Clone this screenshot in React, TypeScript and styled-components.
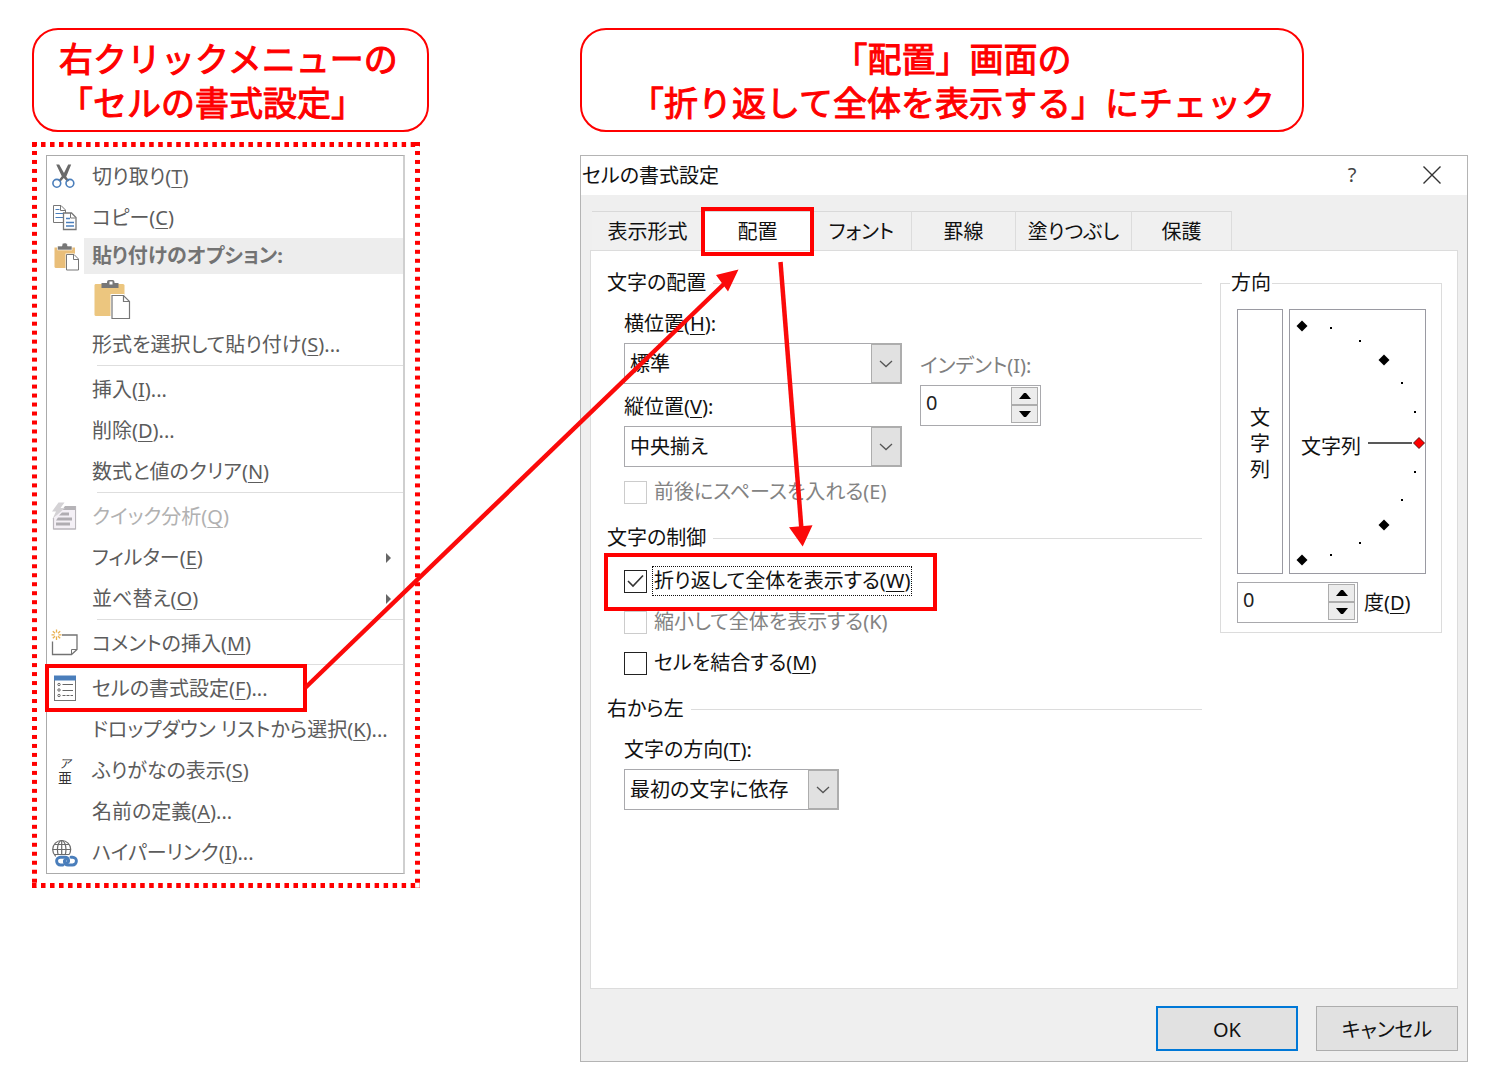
import React, { useState } from "react";
import styled, { createGlobalStyle, css } from "styled-components";

const RED = "#ff0000";
const UI_FONT = '"Noto Sans", "Noto Sans CJK JP", sans-serif';
const JP_FONT = '"Liberation Sans", "Noto Sans CJK JP", sans-serif';

const GlobalStyle = createGlobalStyle`
  *, *::before, *::after { box-sizing: border-box; }
  body {
    margin: 0;
    background: #fff;
    font: 400 20px/24px ${UI_FONT};
    font-feature-settings: "palt";
    color: #111;
  }
  button, input, select { font: inherit; color: inherit; font-feature-settings: inherit; }
  u {
    text-decoration-thickness: 1px;
    text-underline-offset: 3px;
    text-decoration-skip-ink: none;
  }
`;

/* ---------- page ---------- */

const Page = styled.main`
  position: relative;
  display: grid;
  grid-template-columns: 397px minmax(780px, 1fr);
  column-gap: 151px;
  align-items: start;
  padding: 28px 32px;
`;

const Column = styled.section`
  display: flex;
  flex-direction: column;
  align-items: flex-start;
`;

const Callout = styled.h2<{ $centered?: boolean }>`
  margin: 0;
  padding: 8px 25px 4px;
  width: 100%;
  border: 2px solid ${RED};
  border-radius: 26px;
  color: ${RED};
  font: 400 34px/44px ${JP_FONT};
  font-feature-settings: normal;
  -webkit-text-stroke: 1px ${RED};
  white-space: nowrap;
  ${(p) =>
    p.$centered &&
    css`
      width: auto;
      padding-left: 48px;
      padding-right: 27px;
      text-align: center;
    `}
`;

const Highlight = styled.span<{ $inset: string }>`
  position: absolute;
  inset: ${(p) => p.$inset};
  border: 4px solid ${RED};
  pointer-events: none;
  z-index: 1;
`;

const Arrows = styled.svg`
  position: absolute;
  top: 0;
  left: 0;
  pointer-events: none;
  z-index: 2;
`;

/* ---------- context menu ---------- */

const DottedFrame = styled.div`
  margin-top: 10px;
  padding: 13px 15px 14px 14px;
  width: 388px;
  background:
    linear-gradient(90deg, ${RED} 50%, transparent 50%) 0 0 / 9px 5px round no-repeat,
    linear-gradient(90deg, ${RED} 50%, transparent 50%) 0 100% / 9px 5px round no-repeat,
    linear-gradient(${RED} 50%, transparent 50%) 0 0 / 5px 9px no-repeat round,
    linear-gradient(${RED} 50%, transparent 50%) 100% 0 / 5px 9px no-repeat round;
`;

const MenuList = styled.ul`
  margin: 0;
  padding: 0;
  list-style: none;
  background: #fff;
  border: 1px solid #ababab;
  border-right: 2px solid #cfcfcf;
  color: #5c5c5c;
`;

const MenuItem = styled.li<{ $header?: boolean }>`
  position: relative;
  display: grid;
  grid-template-columns: 37px 1fr;
  align-items: center;
  height: ${(p) => (p.$header ? 35 : 41)}px;
`;

const IconCell = styled.span`
  display: flex;
  padding-left: 4px;
`;

const MenuButton = styled.button`
  display: flex;
  align-items: center;
  justify-content: space-between;
  height: 100%;
  padding: 0 12px 0 8px;
  border: 0;
  background: transparent;
  text-align: left;
  white-space: nowrap;
  &:disabled { color: #b1b1b1; }
`;

const MenuHeading = styled.div`
  height: 100%;
  padding-left: 8px;
  background: #ededed;
  color: #737373;
  font-weight: 700;
  line-height: 36px;
`;

const PasteRow = styled.li`
  display: flex;
  align-items: center;
  height: 51px;
  padding-left: 45px;
`;

const PasteButton = styled.button`
  display: flex;
  padding: 0;
  border: 0;
  background: transparent;
`;

const Separator = styled.li`
  height: 4px;
  margin-left: 50px;
  border-top: 1px solid #dedede;
`;

const FuriganaGlyph = styled.span`
  display: flex;
  flex-direction: column;
  align-items: center;
  width: 28px;
  font: 400 14px/14px ${JP_FONT};
  color: #333;
  em { font-size: 12px; }
`;

/* ---------- dialog ---------- */

const Dialog = styled.div`
  width: 100%;
  margin-top: 23px;
  background: #efefef;
  border: 1px solid #b4b4b4;
`;

const TitleBar = styled.header`
  display: flex;
  align-items: center;
  height: 39px;
  background: #fff;
`;

const DialogTitle = styled.h1`
  flex: 1;
  margin: 0;
  padding-left: 1px;
  font-size: 20px;
  font-weight: 400;
`;

const TitleButton = styled.button`
  display: flex;
  align-items: center;
  justify-content: center;
  width: 70px;
  height: 38px;
  padding: 0 0 2px;
  margin-left: 10px;
  border: 0;
  background: transparent;
  color: #444;
`;

const DialogBody = styled.div`
  padding: 16px 9px 10px;
`;

const TabStrip = styled.div`
  display: flex;
  padding-left: 2px;
`;

const Tab = styled.button<{ $width: number; $active?: boolean }>`
  position: relative;
  width: ${(p) => p.$width}px;
  height: 39px;
  padding: 2px 0 0;
  border: 0;
  border-top: 1px solid #d9d9d9;
  border-right: 1px solid #dcdcdc;
  background: ${(p) => (p.$active ? "#fff" : "#f0f0f0")};
  white-space: nowrap;
`;

const TabPanel = styled.div`
  display: grid;
  grid-template-columns: 1fr 222px;
  column-gap: 18px;
  align-items: start;
  min-height: 739px;
  padding: 20px 15px 20px 16px;
  background: #fff;
  border: 1px solid #dcdcdc;
`;

const Section = styled.section`
  margin-bottom: 20px;
`;

const SectionTitle = styled.h3`
  display: flex;
  align-items: center;
  gap: 7px;
  margin: 0;
  font-size: 20px;
  font-weight: 400;
  &::after {
    content: "";
    flex: 1;
    height: 1px;
    background: #dcdcdc;
  }
`;

const SectionBody = styled.div`
  display: flex;
  gap: 18px;
  padding: 17px 0 0 17px;
`;

const FieldColumn = styled.div<{ $offset?: number; $gap: number }>`
  display: flex;
  flex-direction: column;
  align-items: flex-start;
  gap: ${(p) => p.$gap}px;
  padding-top: ${(p) => p.$offset ?? 0}px;
`;

const Field = styled.div<{ $disabled?: boolean }>`
  display: flex;
  flex-direction: column;
  gap: 7px;
  color: ${(p) => (p.$disabled ? "#808080" : "#111")};
`;

const SelectBox = styled.span<{ $width: number }>`
  position: relative;
  display: block;
  width: ${(p) => p.$width}px;
  height: 41px;
`;

const SelectControl = styled.select`
  appearance: none;
  width: 100%;
  height: 100%;
  padding: 0 36px 0 5px;
  border: 1px solid #a9a9ad;
  border-radius: 0;
  background: #fff;
`;

const SelectArrow = styled.span`
  position: absolute;
  top: 0;
  right: 0;
  display: flex;
  align-items: center;
  justify-content: center;
  width: 31px;
  height: 100%;
  border: 2px solid #adadad;
  border-left-width: 1px;
  background: #e1e1e1;
  pointer-events: none;
`;

const CheckRow = styled.label<{ $disabled?: boolean }>`
  position: relative;
  display: flex;
  align-items: center;
  gap: 6px;
  height: 28px;
  color: ${(p) => (p.$disabled ? "#838383" : "#111")};
`;

const CheckInput = styled.input`
  appearance: none;
  width: 23px;
  height: 23px;
  margin: 0;
  border: 1px solid #222;
  background: #fff;
  &:disabled { border-color: #ccc; }
`;

const CheckMark = styled.svg`
  position: absolute;
  top: 0;
  left: 0;
  pointer-events: none;
`;

const CheckText = styled.span<{ $focused?: boolean }>`
  padding: 2px 1px;
  white-space: nowrap;
  outline: ${(p) => (p.$focused ? "1px dotted #111" : "none")};
`;

const SpinBox = styled.span`
  display: flex;
  width: 121px;
  height: 41px;
  padding: 1px 2px 2px 0;
  border: 1px solid #a9a9ad;
  background: #fff;
`;

const SpinInput = styled.input`
  flex: 1;
  min-width: 0;
  padding: 0 0 4px 5px;
  border: 0;
  background: transparent;
  color: #222;
`;

const SpinButtons = styled.span`
  display: grid;
  grid-template-rows: 1fr 1fr;
  width: 27px;
`;

const SpinButton = styled.button`
  display: flex;
  align-items: center;
  justify-content: center;
  padding: 0;
  border: 1px solid #adadad;
  background: #ececec;
`;

const OrientationGroup = styled.fieldset`
  min-width: 0;
  margin: 0;
  padding: 0 9px 9px;
  border: 1px solid #dcdcdc;
`;

const GroupLegend = styled.legend`
  padding: 0 1px;
`;

const OrientationRow = styled.div`
  display: flex;
  gap: 6px;
  padding: 14px 6px 0 7px;
`;

const VerticalText = styled.button`
  display: flex;
  flex-direction: column;
  align-items: center;
  justify-content: center;
  width: 46px;
  height: 265px;
  padding: 5px 0 0;
  border: 1px solid #9a9aa2;
  background: #fff;
  line-height: 26px;
`;

const Dial = styled.div`
  position: relative;
  display: flex;
  align-items: center;
  flex: 1;
  height: 265px;
  padding: 10px 0 0 11px;
  border: 1px solid #9a9aa2;
  svg { position: absolute; inset: -1px; }
`;

const DegreeRow = styled.div`
  display: flex;
  align-items: center;
  gap: 6px;
  padding: 8px 0 0 7px;
`;

const Footer = styled.footer`
  display: flex;
  justify-content: flex-end;
  gap: 18px;
  padding-top: 17px;
`;

const DialogButton = styled.button<{ $primary?: boolean }>`
  width: 142px;
  height: 45px;
  padding: 2px 0 0;
  border: ${(p) => (p.$primary ? "2px solid #0078d7" : "1px solid #adadad")};
  background: #e1e1e1;
`;

/* ---------- icons ---------- */

const MenuSvg = ({ children }: { children: React.ReactNode }) => (
  <svg width="30" height="30" viewBox="0 0 30 30" fill="none" aria-hidden="true">
    {children}
  </svg>
);

const CutIcon = () => (
  <MenuSvg>
    <path d="M5.2 2.500h3l4.800 8.500 4.200-8.500h3l-5 12.200 3.200 4-2.200 1-3.400-3.800-3.400 3.800-2.200-1 3.600-4.400z" fill="#6a6a6a" />
    <circle cx="5.8" cy="21.3" r="3.9" stroke="#4a7ebb" strokeWidth="1.600" />
    <circle cx="18.9" cy="21.3" r="3.9" stroke="#4a7ebb" strokeWidth="1.600" />
  </MenuSvg>
);

const CopyIcon = () => (
  <MenuSvg>
    <path d="M2.500 2.500h7.500l4.500 4.500v12.500h-12z" fill="#fff" stroke="#777" />
    <path d="M9.500 2.500v5h5" stroke="#777" />
    <path d="M4.500 6.500h4M4.500 10.500h8M4.500 14.500h8" stroke="#4a7ebb" />
    <path d="M12.500 10h8l4.500 4.500v12h-12.500z" fill="#fff" stroke="#777" strokeWidth="1.300" />
    <path d="M19.500 10v5h5" stroke="#777" />
    <path d="M15 15.500h4M15 19.500h8M15 23h8" stroke="#4a7ebb" strokeWidth="1.300" />
  </MenuSvg>
);

const PasteIcon = () => (
  <MenuSvg>
    <path d="M3.500 6.500h20.500v20.500H5q-1.500 0-1.500-1.500z" fill="#e9be79" />
    <path d="M6.500 5h4.500V4q0-2 2-2h1.500q2 0 2 2v1h4.500v4h-14.500z" fill="#777" stroke="#fff" strokeWidth=".6" />
    <path d="M14.500 12.500h9l4.500 4.500v12H14.500z" fill="#fff" />
    <path d="M15.500 13.500h7.500l4.500 4.500v11h-12z" fill="#fff" stroke="#777" />
    <path d="M22.500 13.500v5h5" stroke="#777" />
  </MenuSvg>
);

const LargePasteIcon = () => (
  <svg width="40" height="42" viewBox="0 0 40 42" fill="none" aria-hidden="true">
    <path d="M3.500 6H31q1.500 0 1.500 1.500V38H4q-1.500 0-1.500-1.500V7.500Q2.500 6 3.500 6z" fill="#ecc67f" />
    <path d="M9.500 5h5.500V4q0-2 2-2h3.500q2 0 2 2v1h4v5h-17z" fill="#777" />
    <rect x="17.500" y="3.500" width="3" height="3" fill="#fff" />
    <path d="M18.500 16H32l7 7v18.500H18.500z" fill="#fff" />
    <path d="M20 17.500h11.500l6 6v17H20z" fill="#fff" stroke="#777" strokeWidth="1.200" />
    <path d="M31.500 17.500v6h6" stroke="#777" strokeWidth="1.200" />
  </svg>
);

const QuickAnalysisIcon = () => (
  <MenuSvg>
    <path d="M2.500 16v11h22V4" fill="#f4f0f6" stroke="#bcb8be" strokeWidth="1.200" />
    <path d="M14 4h11v4H11z" fill="#b5b3b7" />
    <path d="M8 8h16v18H4V17z" fill="#f4f0f6" />
    <path d="M11 10.500h7v3H8zM7 15.500h14v3H5zM5 20.500h14v3H5z" fill="#b0adb2" />
    <path d="M7.500 .5h6l-4 5.500h4.500L1.500 17 5 9.500H1z" fill="#d4d2d5" />
    <path d="M24.500 4v23h-22" stroke="#b9b6bb" />
  </MenuSvg>
);

const CommentIcon = () => (
  <MenuSvg>
    <path d="M1.500 12.500v13h19l5.500-5V6H11" stroke="#737373" strokeWidth="1.300" />
    <path d="M20.500 25.500v-5h5.500" stroke="#737373" />
    <path d="M5.500 .5v3M5.500 7.500v3.500M.5 5.800h3M7.500 5.800h3M1.800 2.200l2.200 2M7 7.300l2.200 2M9.200 2.200l-2.200 2M4 7.300l-2.200 2" stroke="#e9b04f" strokeWidth="1.300" />
  </MenuSvg>
);

const FormatIcon = () => (
  <MenuSvg>
    <rect x="3.500" y="3" width="21" height="23.500" fill="#fff" stroke="#737373" />
    <path d="M3 1.500h22v5H3z" fill="#4a7ebb" />
    <g stroke="#666">
      <circle cx="8" cy="10.500" r="1.200" />
      <circle cx="8" cy="16" r="1.200" />
      <circle cx="8" cy="21.500" r="1.200" />
      <path d="M11.500 10.500h10.500M11.500 16.500h10.500" />
      <path d="M11.500 21.500h10.500" strokeDasharray="3 1" />
    </g>
  </MenuSvg>
);

const LinkIcon = () => (
  <MenuSvg>
    <g stroke="#6a6a6a" strokeWidth="1.200">
      <circle cx="10.700" cy="11.500" r="9" />
      <ellipse cx="10.700" cy="11.500" rx="4.300" ry="9" />
      <path d="M1.700 11.500h18M10.700 2.500v18M3.300 6.500h14.800M3.300 16.500h14.800" />
    </g>
    <path d="M5 17h17l6 6-4 6H9l-5-5z" fill="#fff" />
    <g stroke="#4a7ebb" strokeWidth="2.900" strokeLinecap="round">
      <path d="M12 27h-2.500a3.900 3.900 0 0 1 0-7.800h4.500c4 0 4.800 5 1.500 5.800" />
      <path d="M20 19.200h1.500a3.900 3.900 0 0 1 0 7.800H17c-4 0-4.800-5-1.500-5.800" />
    </g>
  </MenuSvg>
);

const FuriganaIcon = () => (
  <FuriganaGlyph aria-hidden="true">
    <em>ア</em>
    <span>亜</span>
  </FuriganaGlyph>
);

const Chevron = () => (
  <svg width="14" height="8" viewBox="0 0 14 8" fill="none" aria-hidden="true">
    <path d="M1 1l6 5.500L13 1" stroke="#555" strokeWidth="1.300" />
  </svg>
);

const Triangle = ({ down }: { down?: boolean }) => (
  <svg width="12" height="6" viewBox="0 0 12 6" aria-hidden="true">
    <path d={down ? "M0 0h12L7 6H5z" : "M0 6h12L7 0H5z"} fill="#000" />
  </svg>
);

/* ---------- menu content ---------- */

type Entry =
  | { kind: "item"; label: string; hotkey: string; more?: boolean; icon?: React.ReactNode; disabled?: boolean; submenu?: boolean; marked?: boolean }
  | { kind: "separator" }
  | { kind: "heading"; label: string; icon: React.ReactNode }
  | { kind: "paste" };

const entries: Entry[] = [
  { kind: "item", label: "切り取り", hotkey: "T", icon: <CutIcon /> },
  { kind: "item", label: "コピー", hotkey: "C", icon: <CopyIcon /> },
  { kind: "heading", label: "貼り付けのオプション:", icon: <PasteIcon /> },
  { kind: "paste" },
  { kind: "item", label: "形式を選択して貼り付け", hotkey: "S", more: true },
  { kind: "separator" },
  { kind: "item", label: "挿入", hotkey: "I", more: true },
  { kind: "item", label: "削除", hotkey: "D", more: true },
  { kind: "item", label: "数式と値のクリア", hotkey: "N" },
  { kind: "separator" },
  { kind: "item", label: "クイック分析", hotkey: "Q", icon: <QuickAnalysisIcon />, disabled: true },
  { kind: "item", label: "フィルター", hotkey: "E", submenu: true },
  { kind: "item", label: "並べ替え", hotkey: "O", submenu: true },
  { kind: "separator" },
  { kind: "item", label: "コメントの挿入", hotkey: "M", icon: <CommentIcon /> },
  { kind: "separator" },
  { kind: "item", label: "セルの書式設定", hotkey: "F", more: true, icon: <FormatIcon />, marked: true },
  { kind: "item", label: "ドロップダウン リストから選択", hotkey: "K", more: true },
  { kind: "item", label: "ふりがなの表示", hotkey: "S", icon: <FuriganaIcon /> },
  { kind: "item", label: "名前の定義", hotkey: "A", more: true },
  { kind: "item", label: "ハイパーリンク", hotkey: "I", more: true, icon: <LinkIcon /> },
];

const ContextMenu = () => (
  <MenuList>
    {entries.map((entry, i) => {
      if (entry.kind === "separator") return <Separator key={i} role="separator" />;
      if (entry.kind === "paste")
        return (
          <PasteRow key={i}>
            <PasteButton aria-label="貼り付け"><LargePasteIcon /></PasteButton>
          </PasteRow>
        );
      if (entry.kind === "heading")
        return (
          <MenuItem key={i} $header>
            <IconCell>{entry.icon}</IconCell>
            <MenuHeading>{entry.label}</MenuHeading>
          </MenuItem>
        );
      return (
        <MenuItem key={i}>
          <IconCell>{entry.icon}</IconCell>
          <MenuButton disabled={entry.disabled}>
            <span>
              {entry.label}(<u>{entry.hotkey}</u>){entry.more && "..."}
            </span>
            {entry.submenu && (
              <svg width="5" height="10" viewBox="0 0 5 10" aria-hidden="true">
                <path d="M0 0l5 5-5 5z" fill="#666" />
              </svg>
            )}
          </MenuButton>
          {entry.marked && <Highlight $inset="-4px 96px -3px -2px" />}
        </MenuItem>
      );
    })}
  </MenuList>
);

/* ---------- dialog content ---------- */

const Select = ({ id, width, options }: { id: string; width: number; options: string[] }) => (
  <SelectBox $width={width}>
    <SelectControl id={id}>
      {options.map((o) => (
        <option key={o}>{o}</option>
      ))}
    </SelectControl>
    <SelectArrow><Chevron /></SelectArrow>
  </SelectBox>
);

const Spinner = ({ id }: { id: string }) => {
  const [value, setValue] = useState(0);
  return (
    <SpinBox>
      <SpinInput id={id} inputMode="numeric" value={value} onChange={(e) => setValue(Number(e.target.value) || 0)} />
      <SpinButtons>
        <SpinButton aria-label="増やす" onClick={() => setValue(value + 1)}><Triangle /></SpinButton>
        <SpinButton aria-label="減らす" onClick={() => setValue(value - 1)}><Triangle down /></SpinButton>
      </SpinButtons>
    </SpinBox>
  );
};

type CheckProps = { label: string; hotkey: string; disabled?: boolean; initial?: boolean; marked?: boolean };

const Check = ({ label, hotkey, disabled, initial = false, marked }: CheckProps) => {
  const [checked, setChecked] = useState(initial);
  return (
    <CheckRow $disabled={disabled}>
      <CheckInput type="checkbox" disabled={disabled} checked={checked} onChange={() => setChecked(!checked)} />
      {checked && (
        <CheckMark width="23" height="28" viewBox="0 0 23 28" fill="none">
          <path d="M4 14l5 5L19 8.500" stroke="#333" strokeWidth="1.600" />
        </CheckMark>
      )}
      <CheckText $focused={marked}>
        {label}({disabled ? hotkey : <u>{hotkey}</u>})
      </CheckText>
      {marked && <Highlight $inset="-14px -26px -16px -20px" />}
    </CheckRow>
  );
};

const tabs = [
  { label: "表示形式", width: 112 },
  { label: "配置", width: 108, active: true },
  { label: "フォント", width: 100 },
  { label: "罫線", width: 104 },
  { label: "塗りつぶし", width: 116 },
  { label: "保護", width: 100 },
];

const diamonds = [[13, 17], [95, 51], [95, 216], [13, 251]];
const dots = [[42, 19], [71, 32], [113, 74], [126, 103], [126, 163], [113, 191], [71, 234], [42, 246]];
const diamondPath = (x: number, y: number) => `M${x} ${y - 5.5}l5.500 5.500-5.500 5.500-5.500-5.500z`;

const Orientation = () => (
  <OrientationGroup>
    <GroupLegend>方向</GroupLegend>
    <OrientationRow>
      <VerticalText aria-label="縦書き">
        {["文", "字", "列"].map((c) => (
          <span key={c}>{c}</span>
        ))}
      </VerticalText>
      <Dial>
        <span>文字列</span>
        <svg width="137" height="265" viewBox="0 0 137 265" aria-hidden="true">
          {diamonds.map(([x, y]) => (
            <path key={`${x}-${y}`} d={diamondPath(x, y)} />
          ))}
          {dots.map(([x, y]) => (
            <rect key={`${x}-${y}`} x={x - 1} y={y - 1} width="2" height="2" />
          ))}
          <path d="M79 134h44" stroke="#222" strokeWidth="1.500" />
          <path d={diamondPath(130, 134)} fill="#f00" stroke="#300" strokeWidth=".8" />
        </svg>
      </Dial>
    </OrientationRow>
    <DegreeRow>
      <Spinner id="degrees" />
      <label htmlFor="degrees">度(<u>D</u>)</label>
    </DegreeRow>
  </OrientationGroup>
);

const FormatDialog = () => (
  <Dialog role="dialog" aria-labelledby="dialog-title">
    <TitleBar>
      <DialogTitle id="dialog-title">セルの書式設定</DialogTitle>
      <TitleButton>?</TitleButton>
      <TitleButton aria-label="閉じる">
        <svg width="18" height="18" viewBox="0 0 18 18" aria-hidden="true">
          <path d="M.5 .5l17 17M17.500 .5l-17 17" stroke="#333" strokeWidth="1.400" />
        </svg>
      </TitleButton>
    </TitleBar>
    <DialogBody>
      <TabStrip role="tablist">
        {tabs.map((t) => (
          <Tab key={t.label} role="tab" aria-selected={!!t.active} $width={t.width} $active={t.active}>
            {t.label}
            {t.active && <Highlight $inset="-5px -3px -6px -3px" />}
          </Tab>
        ))}
      </TabStrip>
      <TabPanel role="tabpanel">
        <div>
          <Section>
            <SectionTitle>文字の配置</SectionTitle>
            <SectionBody>
              <FieldColumn $gap={11}>
                <Field>
                  <label htmlFor="horizontal">横位置(<u>H</u>):</label>
                  <Select id="horizontal" width={278} options={["標準", "中央揃え"]} />
                </Field>
                <Field>
                  <label htmlFor="vertical">縦位置(<u>V</u>):</label>
                  <Select id="vertical" width={278} options={["中央揃え", "上詰め"]} />
                </Field>
                <Check label="前後にスペースを入れる" hotkey="E" disabled />
              </FieldColumn>
              <FieldColumn $gap={11} $offset={42}>
                <Field $disabled>
                  <label htmlFor="indent">インデント(I):</label>
                  <Spinner id="indent" />
                </Field>
              </FieldColumn>
            </SectionBody>
          </Section>
          <Section>
            <SectionTitle>文字の制御</SectionTitle>
            <SectionBody>
              <FieldColumn $gap={13}>
                <Check label="折り返して全体を表示する" hotkey="W" initial marked />
                <Check label="縮小して全体を表示する" hotkey="K" disabled />
                <Check label="セルを結合する" hotkey="M" />
              </FieldColumn>
            </SectionBody>
          </Section>
          <Section>
            <SectionTitle>右から左</SectionTitle>
            <SectionBody>
              <Field>
                <label htmlFor="direction">文字の方向(<u>T</u>):</label>
                <Select id="direction" width={215} options={["最初の文字に依存", "左から右", "右から左"]} />
              </Field>
            </SectionBody>
          </Section>
        </div>
        <Orientation />
      </TabPanel>
      <Footer>
        <DialogButton $primary>OK</DialogButton>
        <DialogButton>キャンセル</DialogButton>
      </Footer>
    </DialogBody>
  </Dialog>
);

export default function App() {
  return (
    <>
      <GlobalStyle />
      <Page lang="ja">
        <Column>
          <Callout>
            右クリックメニューの
            <br />
            「セルの書式設定」
          </Callout>
          <DottedFrame>
            <ContextMenu />
          </DottedFrame>
        </Column>
        <Column>
          <Callout $centered>
            「配置」画面の
            <br />
            「折り返して全体を表示する」にチェック
          </Callout>
          <FormatDialog />
        </Column>
        <Arrows width="940" height="720" viewBox="0 0 940 720" aria-hidden="true">
          <g stroke="#fb0a0a" strokeWidth="4.500">
            <path d="M305 688L726 282" />
            <path d="M780.500 262L801.500 530" />
          </g>
          <path d="M738.500 269.500L716 275l12 16.500zM802.700 546.500L789 527.300l23.500-2z" fill="#fb0a0a" />
        </Arrows>
      </Page>
    </>
  );
}
